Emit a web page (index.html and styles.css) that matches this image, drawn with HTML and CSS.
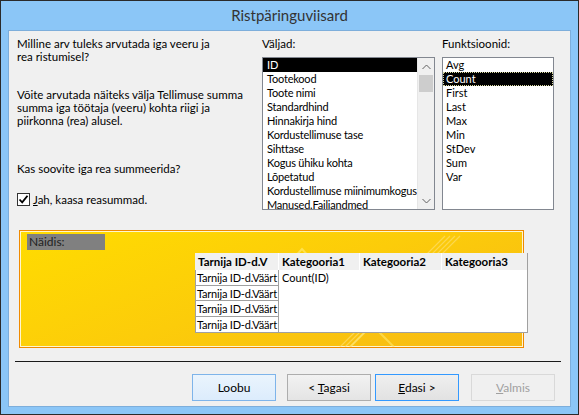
FILE: index.html
```html
<!DOCTYPE html>
<html lang="et">
<head>
  <meta charset="UTF-8" />
  <title>Ristpäringuviisard</title>
  <link rel="stylesheet" href="styles.css">
</head>
<body>
  <div class="window">
    <div class="titlebar">Ristpäringuviisard</div>

    <div class="client">
      <!-- Question + lists -->
      <div class="top">
        <div class="intro">
          <p class="q1">Milline arv tuleks arvutada iga veeru ja<br>rea ristumisel?</p>
          <p class="q2">Võite arvutada näiteks välja Tellimuse summa<br>summa iga töötaja (veeru) kohta riigi ja<br>piirkonna (rea) alusel.</p>
          <p class="q3">Kas soovite iga rea summeerida?</p>
          <div class="check">
            <span class="box">
              <svg width="11" height="11" viewBox="0 0 11 11"><path d="M1.5 5.5 L4.2 8.4 L9.5 1.8" fill="none" stroke="#000" stroke-width="1.8"/></svg>
            </span>
            <span><u>J</u>ah, kaasa reasummad.</span>
          </div>
        </div>

        <div class="col">
          <div class="label">Väljad:</div>
          <div class="listbox fields">
            <ul>
              <li class="sel">ID</li>
              <li>Tootekood</li>
              <li>Toote nimi</li>
              <li>Standardhind</li>
              <li>Hinnakirja hind</li>
              <li>Kordustellimuse tase</li>
              <li>Sihttase</li>
              <li>Kogus ühiku kohta</li>
              <li>Lõpetatud</li>
              <li>Kordustellimuse miinimumkogus</li>
              <li>Manused.Failiandmed</li>
            </ul>
            <div class="scrollbar">
              <div class="arrow">
                <svg width="9" height="6" viewBox="0 0 9 6"><path d="M0.5 5 L4.5 1 L8.5 5" fill="none" stroke="#606060"/></svg>
              </div>
              <div class="thumb"></div>
              <div class="track"></div>
              <div class="arrow">
                <svg width="9" height="6" viewBox="0 0 9 6"><path d="M0.5 1 L4.5 5 L8.5 1" fill="none" stroke="#606060"/></svg>
              </div>
            </div>
          </div>
        </div>

        <div class="col">
          <div class="label">Funktsioonid:</div>
          <div class="listbox funcs">
            <ul>
              <li>Avg</li>
              <li class="sel focus">Count</li>
              <li>First</li>
              <li>Last</li>
              <li>Max</li>
              <li>Min</li>
              <li>StDev</li>
              <li>Sum</li>
              <li>Var</li>
            </ul>
          </div>
        </div>
      </div>

      <!-- Sample preview -->
      <div class="sample">
        <svg class="deco" width="503" height="116" viewBox="0 0 503 116">
          <path d="M262 40 L282 18 L302 40" fill="none" stroke="#ffe86a" stroke-width="2" opacity="0.7"/>
          <path d="M330 116 L352 94 L374 116" fill="none" stroke="#ffe86a" stroke-width="2" opacity="0.6"/>
          <g stroke="#ffe27a" stroke-width="1.2" opacity="0.6">
            <path d="M400 30 L425 5"/><path d="M405 30 L430 5"/><path d="M410 30 L435 5"/><path d="M415 30 L440 5"/>
            <path d="M320 116 L335 101"/><path d="M325 116 L340 101"/><path d="M330 116 L345 101"/>
          </g>
        </svg>
        <div class="sample-label">Näidis:</div>
        <div class="grid">
          <div class="head">
            <div class="hc c1">Tarnija ID-d.V</div>
            <div class="hc c2">Kategooria1</div>
            <div class="hc c3">Kategooria2</div>
            <div class="hc c4">Kategooria3</div>
          </div>
          <div class="body">
            <div class="rows">
              <div class="row">Tarnija ID-d.Väärt</div>
              <div class="row">Tarnija ID-d.Väärt</div>
              <div class="row">Tarnija ID-d.Väärt</div>
              <div class="row">Tarnija ID-d.Väärt</div>
            </div>
            <div class="values">Count(ID)</div>
          </div>
        </div>
      </div>

      <div class="rule"></div>

      <!-- Buttons -->
      <div class="buttons">
        <button class="btn hover">Loobu</button>
        <button class="btn back">&lt; <u>T</u>agasi</button>
        <button class="btn next"><u>E</u>dasi &gt;</button>
        <button class="btn disabled"><u>V</u>almis</button>
      </div>
    </div>
  </div>
</body>
</html>
```

FILE: styles.css
```css
* {
  box-sizing: border-box;
}

body {
  margin: 0;
  background: #ffffff;
  font-family: Lato, 'Noto Sans', sans-serif;
  font-size: 11.5px;
  color: #000;
}

.window {
  width: 579px;
  height: 415px;
  border: 1px solid #2a2a2a;
  background-color: #8bc6f7;
  padding: 0 7px 7px 7px;
  display: flex;
  flex-direction: column;
}

.titlebar {
  height: 29px;
  line-height: 29px;
  text-align: center;
  font-size: 15px;
  color: #333;
}

.client {
  flex: 1;
  background-color: #f0f0f0;
  border: 1px solid #7daedb;
  display: flex;
  flex-direction: column;
}

/* top part */
.top {
  display: grid;
  grid-template-columns: 238px 173px 112px;
  column-gap: 7px;
  padding: 6px 0 0 8px;
  height: 180px;
}

.intro p {
  margin: 0;
  line-height: 13px;
}

.q2 {
  margin-top: 25px !important;
}

.q3 {
  margin-top: 35px !important;
}

.check {
  display: flex;
  align-items: center;
  gap: 3px;
  margin-top: 17px;
  height: 14px;
}

.check .box {
  width: 13px;
  height: 13px;
  border: 1px solid #333;
  background: #fff;
  display: flex;
  align-items: center;
  justify-content: center;
}

.label {
  line-height: 13px;
  margin-bottom: 7px;
}

.listbox {
  height: 153px;
  border: 1px solid #828790;
  background: #fff;
  display: flex;
  overflow: hidden;
}

.listbox ul {
  list-style: none;
  margin: 0;
  padding: 0;
  flex: 1;
  min-width: 0;
}

.listbox li {
  height: 14px;
  line-height: 14px;
  font-size: 11px;
  white-space: nowrap;
  overflow: hidden;
}

.fields li {
  padding-left: 4px;
  letter-spacing: -0.2px;
}

.funcs li {
  padding-left: 3px;
}

.listbox li.sel {
  background: #000;
  color: #fff;
}

.listbox li.focus {
  outline: 1px dotted #d8d8a0;
  outline-offset: -1px;
}

.scrollbar {
  width: 17px;
  background: #f0f0f0;
  border-left: 1px solid #e6e6e6;
  display: flex;
  flex-direction: column;
}

.scrollbar .arrow {
  height: 17px;
  display: flex;
  align-items: center;
  justify-content: center;
}

.scrollbar .thumb {
  height: 17px;
  margin: 0 1px;
  background: #cdcdcd;
}

.scrollbar .track {
  flex: 1;
}

/* sample */
.sample {
  position: relative;
  margin: 19px 0 0 10px;
  width: 505px;
  height: 118px;
  border: 1px solid #f08a00;
  box-shadow: inset 0 0 0 1px #fff6d0;
  background: linear-gradient(160deg, #ffdc00 0%, #fccc0a 50%, #f7b915 100%);
  padding: 3px 0 0 7px;
}

.sample .deco {
  position: absolute;
  top: 0;
  left: 0;
  pointer-events: none;
}

.sample-label {
  position: relative;
  width: 78px;
  height: 16px;
  line-height: 16px;
  background: #808080;
  color: #222;
  padding-left: 2px;
  font-size: 12px;
}

.grid {
  position: relative;
  margin: 3px 0 0 168px;
  width: 333px;
  font-size: 11px;
}

.head {
  display: flex;
  height: 17px;
  background: #f0f0f0;
  border-right: 1px solid #a0a0a0;
}

.hc {
  font-weight: bold;
  font-size: 11.5px;
  line-height: 17px;
  padding-left: 3px;
  border-right: 1px solid #fff;
  white-space: nowrap;
  overflow: hidden;
}

.hc.c1 { width: 84px; }
.hc.c2 { width: 81px; }
.hc.c3 { width: 82px; }
.hc.c4 { width: 85px; border-right: none; }

.body {
  display: flex;
  height: 63px;
  background: #fff;
  border-right: 1px solid #a0a0a0;
  border-bottom: 1px solid #a0a0a0;
}

.rows {
  width: 84px;
  border-left: 1px solid #a0a0a0;
  border-right: 1px solid #a0a0a0;
}

.row {
  height: 15.5px;
  line-height: 15px;
  padding-left: 1px;
  letter-spacing: -0.2px;
  border-bottom: 1px solid #a0a0a0;
  white-space: nowrap;
  overflow: hidden;
}

.row:last-child {
  border-bottom: none;
}

.values {
  padding: 1px 0 0 3px;
  line-height: 14px;
}

.rule {
  margin: 13px 0 0 6px;
  width: 546px;
  height: 1px;
  background: #1a1a1a;
}

.buttons {
  display: flex;
  justify-content: flex-end;
  margin-top: 12px;
  padding-right: 15px;
}

.btn {
  width: 84px;
  height: 27px;
  font-family: inherit;
  font-size: 12px;
  color: #000;
  border: 1px solid #adadad;
  background: linear-gradient(#f2f2f2, #e4e4e4);
  padding: 0;
}

.btn.hover {
  background: linear-gradient(#eaf4fd, #dcecfc);
  border-color: #7eb4ea;
}

.btn.back {
  margin-left: 11px;
}

.btn.next {
  margin-left: 4px;
  border-color: #3399ff;
  background: linear-gradient(#efefef, #e2e2e2);
}

.btn.disabled {
  margin-left: 12px;
  color: #a0a0a0;
  border-color: #d9d9d9;
  background: #f0f0f0;
}
```
